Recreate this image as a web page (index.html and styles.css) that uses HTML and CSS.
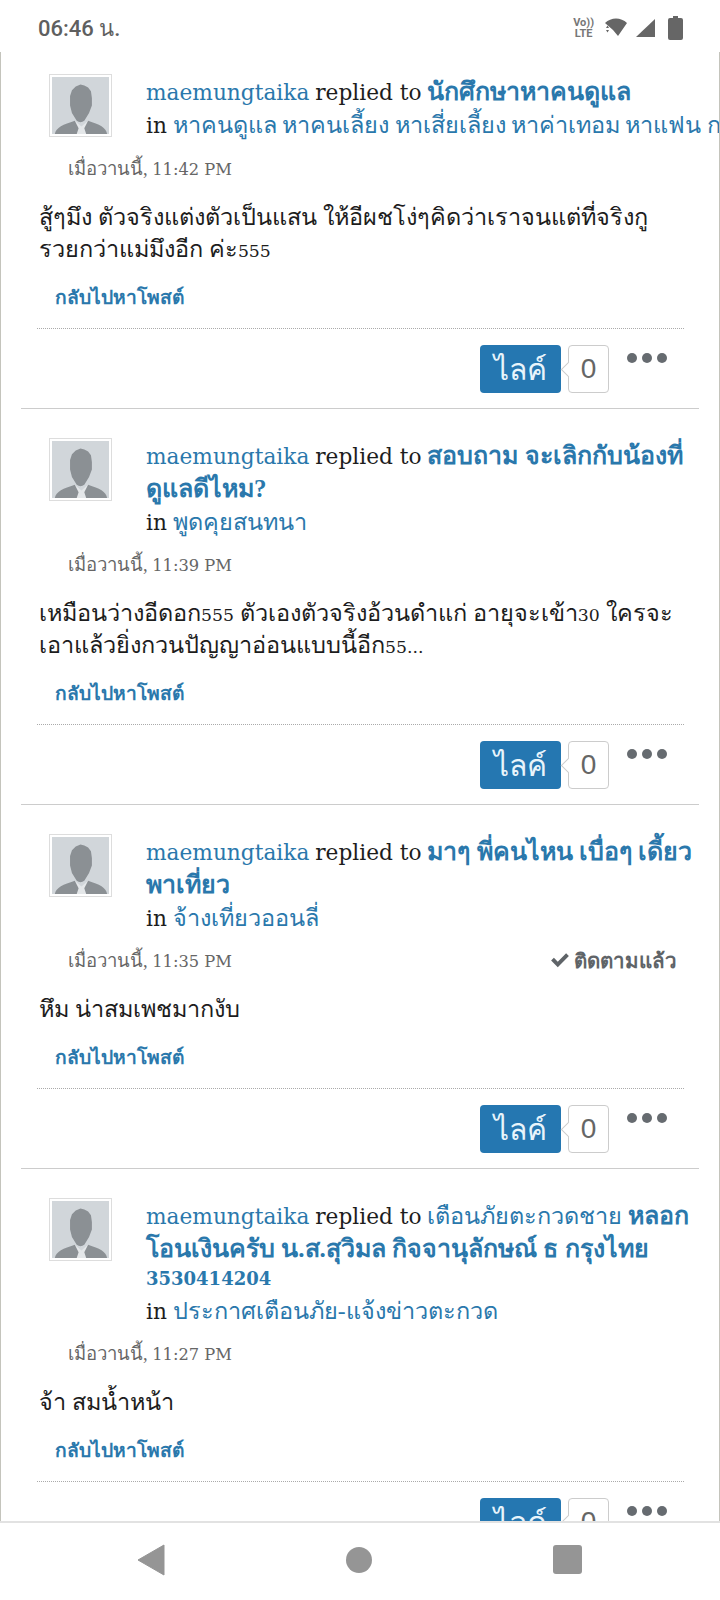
FILE: index.html
```html
<!DOCTYPE html>
<html lang="th">
<head>
    <meta charset="UTF-8">
    <meta name="viewport" content="width=device-width, initial-scale=1.0">
    <title>Activity feed</title>
    <link rel="stylesheet" href="styles.css">
</head>
<body>
    <!-- Phone status bar -->
    <header class="status-bar">
        <span class="clock">06:46 น.</span>
        <div class="status-icons">
            <span class="volte">Vo))<br>LTE</span>
            <svg class="icon-wifi" width="24" height="20" viewBox="0 0 24 20"><path d="M1 5 C7 -1 17 -1 23 5 L14 18 L9 12 Z" fill="#666"/><path d="M2 10 L5 10 L3.5 7.5 Z M2 12 L5 12 L3.5 14.5 Z" fill="#666"/></svg>
            <svg class="icon-signal" width="19" height="18" viewBox="0 0 19 18"><path d="M19 0 V18 H0 Z" fill="#666"/></svg>
            <svg class="icon-battery" width="15" height="24" viewBox="0 0 15 24"><path d="M5 0 H10 V2 H13 Q15 2 15 4 V22 Q15 24 13 24 H2 Q0 24 0 22 V4 Q0 2 2 2 H5 Z" fill="#666"/></svg>
        </div>
    </header>

    <main class="feed">
        <article class="post post-first">
            <div class="post-head">
                <div class="avatar"><svg viewBox="0 0 60 60"><path d="M24 46 L31 52 L38 46 L36 60 L26 60 Z" fill="#e4e7e9"/><path d="M30 8 L34 9 L38 11 L41 15 L42 22 L42 30 L39 38 L34 46 Q30 49 26 46 L21 38 L19 30 L19 20 L21 14 L25 10 Z M3 60 C4 53 12 50 24 46 L28 54 L26 60 Z M58 60 C57 53 50 50 38 46 L34 54 L36 60 Z" fill="#8b9094"/></svg></div>
                <div class="post-title">
                    <a class="user lat">maemungtaika</a> <span class="lat">replied to</span> <a class="thread">นักศึกษาหาคนดูแล</a><br>
                    <span class="lat">in</span> <a class="forum forum-long">หาคนดูแล หาคนเลี้ยง หาเสี่ยเลี้ยง หาค่าเทอม หาแฟน ก</a>
                </div>
            </div>
            <div class="post-meta"><span class="date">เมื่อวานนี้, <span class="lat">11:42 PM</span></span></div>
            <p class="post-body">สู้ๆมึง ตัวจริงแต่งตัวเป็นแสน ให้อีผชโง่ๆคิดว่าเราจนแต่ที่จริงกู<br>รวยกว่าแม่มึงอีก ค่ะ<span class="lat">555</span></p>
            <a class="back-link">กลับไปหาโพสต์</a>
            <div class="post-actions">
                <button class="like">ไลค์</button>
                <span class="like-count">0</span>
                <span class="more"><i></i><i></i><i></i></span>
            </div>
        </article>

        <article class="post">
            <div class="post-head">
                <div class="avatar"><svg viewBox="0 0 60 60"><path d="M24 46 L31 52 L38 46 L36 60 L26 60 Z" fill="#e4e7e9"/><path d="M30 8 L34 9 L38 11 L41 15 L42 22 L42 30 L39 38 L34 46 Q30 49 26 46 L21 38 L19 30 L19 20 L21 14 L25 10 Z M3 60 C4 53 12 50 24 46 L28 54 L26 60 Z M58 60 C57 53 50 50 38 46 L34 54 L36 60 Z" fill="#8b9094"/></svg></div>
                <div class="post-title">
                    <a class="user lat">maemungtaika</a> <span class="lat">replied to</span> <a class="thread">สอบถาม จะเลิกกับน้องที่<br>ดูแลดีไหม?</a><br>
                    <span class="lat">in</span> <a class="forum">พูดคุยสนทนา</a>
                </div>
            </div>
            <div class="post-meta"><span class="date">เมื่อวานนี้, <span class="lat">11:39 PM</span></span></div>
            <p class="post-body">เหมือนว่างอีดอก<span class="lat">555</span> ตัวเองตัวจริงอ้วนดำแก่ อายุจะเข้า<span class="lat">30</span> ใครจะ<br>เอาแล้วยิ่งกวนปัญญาอ่อนแบบนี้อีก<span class="lat">55...</span></p>
            <a class="back-link">กลับไปหาโพสต์</a>
            <div class="post-actions">
                <button class="like">ไลค์</button>
                <span class="like-count">0</span>
                <span class="more"><i></i><i></i><i></i></span>
            </div>
        </article>

        <article class="post">
            <div class="post-head">
                <div class="avatar"><svg viewBox="0 0 60 60"><path d="M24 46 L31 52 L38 46 L36 60 L26 60 Z" fill="#e4e7e9"/><path d="M30 8 L34 9 L38 11 L41 15 L42 22 L42 30 L39 38 L34 46 Q30 49 26 46 L21 38 L19 30 L19 20 L21 14 L25 10 Z M3 60 C4 53 12 50 24 46 L28 54 L26 60 Z M58 60 C57 53 50 50 38 46 L34 54 L36 60 Z" fill="#8b9094"/></svg></div>
                <div class="post-title">
                    <a class="user lat">maemungtaika</a> <span class="lat">replied to</span> <a class="thread">มาๆ พี่คนไหน เบื่อๆ เดี้ยว<br>พาเที่ยว</a><br>
                    <span class="lat">in</span> <a class="forum">จ้างเที่ยวออนลี่</a>
                </div>
            </div>
            <div class="post-meta">
                <span class="date">เมื่อวานนี้, <span class="lat">11:35 PM</span></span>
                <span class="following">
                    <svg width="20" height="16" viewBox="0 0 18 14"><path d="M1 7.5 L3.5 5 L7 8.5 L14.5 1 L17 3.5 L7 13.5 Z" fill="#5f6468"/></svg>
                    ติดตามแล้ว
                </span>
            </div>
            <p class="post-body">หึม น่าสมเพชมากงับ</p>
            <a class="back-link">กลับไปหาโพสต์</a>
            <div class="post-actions">
                <button class="like">ไลค์</button>
                <span class="like-count">0</span>
                <span class="more"><i></i><i></i><i></i></span>
            </div>
        </article>

        <article class="post">
            <div class="post-head">
                <div class="avatar"><svg viewBox="0 0 60 60"><path d="M24 46 L31 52 L38 46 L36 60 L26 60 Z" fill="#e4e7e9"/><path d="M30 8 L34 9 L38 11 L41 15 L42 22 L42 30 L39 38 L34 46 Q30 49 26 46 L21 38 L19 30 L19 20 L21 14 L25 10 Z M3 60 C4 53 12 50 24 46 L28 54 L26 60 Z M58 60 C57 53 50 50 38 46 L34 54 L36 60 Z" fill="#8b9094"/></svg></div>
                <div class="post-title">
                    <a class="user lat">maemungtaika</a> <span class="lat">replied to</span> <a class="forum">เตือนภัยตะกวดชาย</a> <a class="thread">หลอก<br>โอนเงินครับ น.ส.สุวิมล กิจจานุลักษณ์ ธ กรุงไทย<span class="thread-code">3530414204</span></a>
                    <span class="lat">in</span> <a class="forum">ประกาศเตือนภัย-แจ้งข่าวตะกวด</a>
                </div>
            </div>
            <div class="post-meta"><span class="date">เมื่อวานนี้, <span class="lat">11:27 PM</span></span></div>
            <p class="post-body">จ้า สมน้ำหน้า</p>
            <a class="back-link">กลับไปหาโพสต์</a>
            <div class="post-actions">
                <button class="like">ไลค์</button>
                <span class="like-count">0</span>
                <span class="more"><i></i><i></i><i></i></span>
            </div>
        </article>
    </main>

    <!-- Android nav buttons -->
    <nav class="nav-bar">
        <svg width="28" height="32" viewBox="0 0 28 32"><path d="M27 1 V31 L1 16 Z" fill="#959595" stroke="#959595" stroke-linejoin="round"/></svg>
        <svg width="26" height="26" viewBox="0 0 26 26"><circle cx="13" cy="13" r="13" fill="#959595"/></svg>
        <svg width="29" height="29" viewBox="0 0 29 29"><rect width="29" height="29" rx="3" fill="#959595"/></svg>
    </nav>
</body>
</html>
```

FILE: styles.css
```css
* {
    box-sizing: border-box;
}
body {
    margin: 0;
    height: 1600px;
    display: flex;
    flex-direction: column;
    overflow: hidden;
    background: #fff;
    color: #1d1d1d;
    font-family: "Liberation Serif", "Noto Sans CJK SC", serif;
}
a {
    color: #2a78ac;
}
/* latin runs are wider and smaller than the thai around them */
.lat {
    font-family: "DejaVu Serif", serif;
    line-height: 1;
}

/* status bar */
.status-bar {
    height: 52px;
    flex: none;
    display: flex;
    justify-content: space-between;
    align-items: center;
    padding: 4px 37px 0 38px;
    color: #5f5f5f;
}
.clock {
    font-family: Roboto, sans-serif;
    font-size: 22px;
    font-weight: 500;
}
.status-icons {
    display: flex;
    align-items: center;
    gap: 8px;
}
.volte {
    margin-right: 2px;
    font-family: Roboto, sans-serif;
    font-size: 11px;
    line-height: 11px;
    font-weight: 700;
    color: #777;
    text-align: center;
}
.icon-battery {
    margin-left: 5px;
}

/* feed */
.feed {
    flex: 1;
    min-height: 0;
    overflow: hidden;
    padding: 0 20px;
    border-left: 1px solid #c4c4bc;
    border-right: 1px solid #c4c4bc;
}
.post {
    padding: 29px 15px 15px 16px;
    border-bottom: 1px solid #ccc;
}
.post-first {
    padding-top: 22px;
}
.post-head {
    display: flex;
    gap: 34px;
    min-height: 69px;
    padding-left: 12px;
}
.avatar {
    flex: none;
    width: 63px;
    height: 63px;
    padding: 2px;
    border: 1px solid #ddd;
}
.avatar svg {
    display: block;
    width: 100%;
    height: 100%;
    background: #d1d6da;
}
.post-title {
    padding-top: 2px;
    font-size: 23.5px;
    line-height: 33px;
    white-space: nowrap;
    flex: 1;
    min-width: 0;
}
.post-title .lat {
    font-size: 21.7px;
}
.forum {
    line-height: 1;
}
.forum-long {
    word-spacing: -0.5px;
}
.thread {
    font-size: 25px;
    line-height: 1;
    font-weight: 700;
}
.thread-code {
    display: block;
    margin-top: -4px;
    font-family: "DejaVu Serif", serif;
    font-size: 18px;
    line-height: 33px;
}
.post-meta {
    display: flex;
    justify-content: space-between;
    align-items: center;
    height: 28px;
    margin-top: 11px;
    padding: 0 7px 0 31px;
}
.date {
    font-size: 18.5px;
    color: #666;
}
.date .lat {
    font-size: 16.3px;
}
.following {
    display: flex;
    align-items: center;
    gap: 4px;
    font-size: 20.5px;
    font-weight: 700;
    color: #5f6468;
}
.post-body {
    margin: 19px 0 0 2px;
    font-size: 23.5px;
    line-height: 32px;
}
.post-body .lat {
    font-size: 17.3px;
}
.back-link {
    display: block;
    margin: 17px 0 0 18px;
    font-size: 19.2px;
    line-height: 32px;
    font-weight: 700;
}
.post-actions {
    display: flex;
    align-items: flex-start;
    justify-content: flex-end;
    margin-top: 14px;
    padding-top: 16px;
    border-top: 1px dotted #aaa;
}
.like {
    width: 81px;
    height: 48px;
    padding: 0;
    border: none;
    border-radius: 4px;
    background: #2577b1;
    color: #e8f4fb;
    font-family: "Noto Sans", "Noto Sans CJK SC", sans-serif;
    font-size: 30px;
    line-height: 40px;
}
.like-count {
    position: relative;
    width: 41px;
    height: 48px;
    margin-left: 7px;
    border: 1px solid #ccc;
    border-radius: 4px;
    color: #666;
    font-family: "Liberation Sans", sans-serif;
    font-size: 28px;
    line-height: 46px;
    text-align: center;
}
.like-count::before {
    content: "";
    position: absolute;
    left: -6px;
    top: 18px;
    width: 10px;
    height: 10px;
    background: #fff;
    border-left: 1px solid #ccc;
    border-bottom: 1px solid #ccc;
    transform: rotate(45deg);
}
.more {
    display: flex;
    gap: 5px;
    margin: 8px 17px 0 18px;
}
.more i {
    width: 10px;
    height: 10px;
    border-radius: 50%;
    background: #666b70;
}

/* nav bar */
.nav-bar {
    flex: none;
    height: 79px;
    display: flex;
    align-items: center;
    justify-content: space-between;
    padding: 0 138px 4px 137px;
    border-top: 2px solid #e2e2e2;
    background: #fff;
}
```
